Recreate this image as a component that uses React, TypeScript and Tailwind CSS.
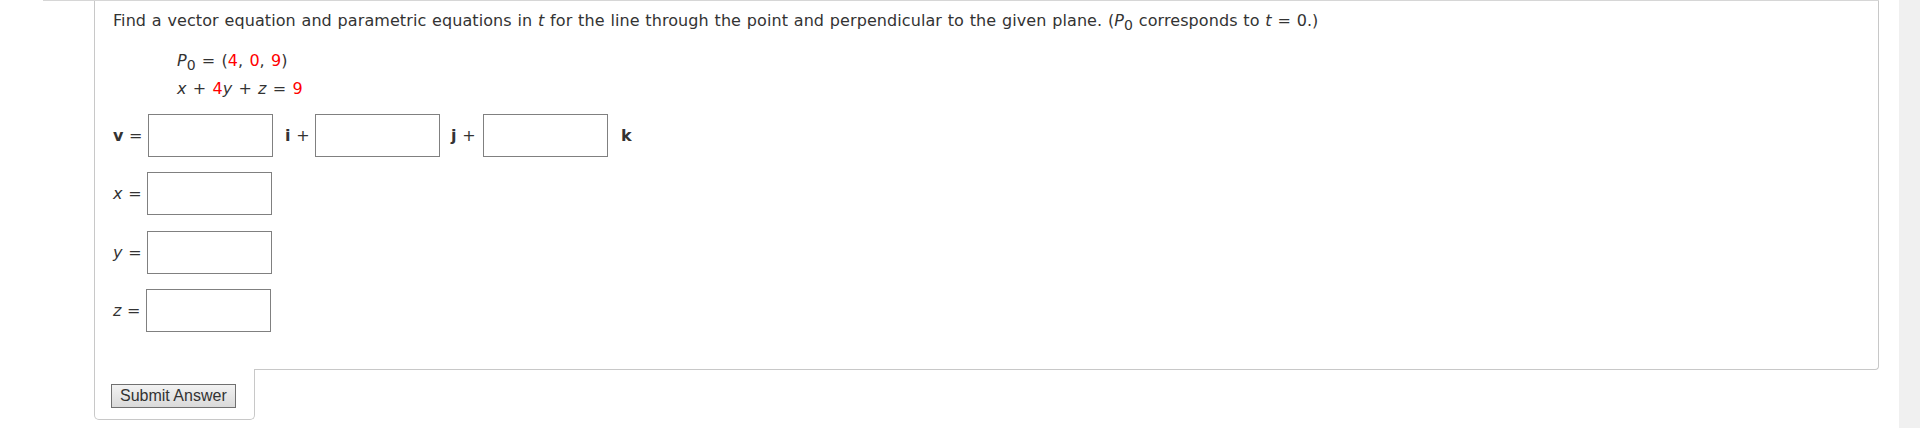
import React from 'react';

const Red: React.FC<{ children: React.ReactNode }> = ({ children }) => (
  <span className="text-[#ff0000]">{children}</span>
);

const Box: React.FC = () => (
  <input
    type="text"
    className="w-[125px] h-[43px] border border-[#808080] bg-white outline-none shrink-0"
  />
);

const App: React.FC = () => {
  return (
    <div className="w-[1920px] h-[428px] bg-white flex overflow-hidden font-['DejaVu_Sans',Verdana,sans-serif] text-[16px] text-[#333]">
      <div className="flex-1 flex flex-col">
        {/* top edge of previous block */}
        <div className="ml-[43px] w-[1836px] h-px bg-[#d6d6d6]" />

        {/* Question panel */}
        <div className="ml-[94px] w-[1785px] h-[369px] border-l border-r border-b border-[#c8c8c8] rounded-br-[4px] pl-[18px] pt-[8px] [word-spacing:0.6px]">
          <p className="leading-[24px] whitespace-nowrap tracking-[0.08px]">
            Find a vector equation and parametric equations in <i>t</i> for the line through the point and perpendicular to the given plane. (
            <i>P</i>
            <span className="relative top-[4px] text-[14px] leading-none">0</span> corresponds to <i>t</i> = 0.)
          </p>

          <div className="pl-[64px] mt-[14px] leading-[28px] whitespace-nowrap [word-spacing:1.2px]">
            <div>
              <i>P</i>
              <span className="relative top-[4px] text-[14px] leading-none">0</span> = (<Red>4</Red>, <Red>0</Red>, <Red>9</Red>)
            </div>
            <div>
              <i>x</i> + <Red>4</Red>
              <i>y</i> + <i>z</i> = <Red>9</Red>
            </div>
          </div>

          {/* vector row */}
          <div className="mt-[11px] flex items-center h-[43px]">
            <span className="w-[35px] shrink-0 whitespace-nowrap">
              <b>v</b> =
            </span>
            <Box />
            <span className="w-[42px] shrink-0 pl-[12px] whitespace-nowrap">
              <b>i</b> +
            </span>
            <Box />
            <span className="w-[43px] shrink-0 pl-[11px] whitespace-nowrap">
              <b>j</b> +
            </span>
            <Box />
            <span className="pl-[13px]">
              <b>k</b>
            </span>
          </div>

          {/* parametric rows */}
          <div className="mt-[15px] flex items-center h-[43px]">
            <span className="w-[34px] shrink-0 whitespace-nowrap">
              <i>x</i> =
            </span>
            <Box />
          </div>
          <div className="mt-[16px] flex items-center h-[43px]">
            <span className="w-[34px] shrink-0 whitespace-nowrap">
              <i>y</i> =
            </span>
            <Box />
          </div>
          <div className="mt-[15px] flex items-center h-[43px]">
            <span className="w-[33px] shrink-0 whitespace-nowrap">
              <i>z</i> =
            </span>
            <Box />
          </div>
        </div>

        {/* Submit tab */}
        <div className="ml-[94px] w-[161px] h-[51px] -mt-px relative bg-white border-l border-r border-b border-[#c8c8c8] rounded-b-[5px] pl-[16px] pt-[15px]">
          <button
            type="button"
            className="h-[24px] px-[8px] border border-[#707070] bg-gradient-to-b from-[#f2f2f2] to-[#dadada] font-['Liberation_Sans',Arial,sans-serif] text-[16px] leading-none text-[#333]"
          >
            Submit Answer
          </button>
        </div>
      </div>

      {/* scrollbar track */}
      <div className="w-[21px] h-full bg-[#f0f0f0]" />
    </div>
  );
};

export default App;
